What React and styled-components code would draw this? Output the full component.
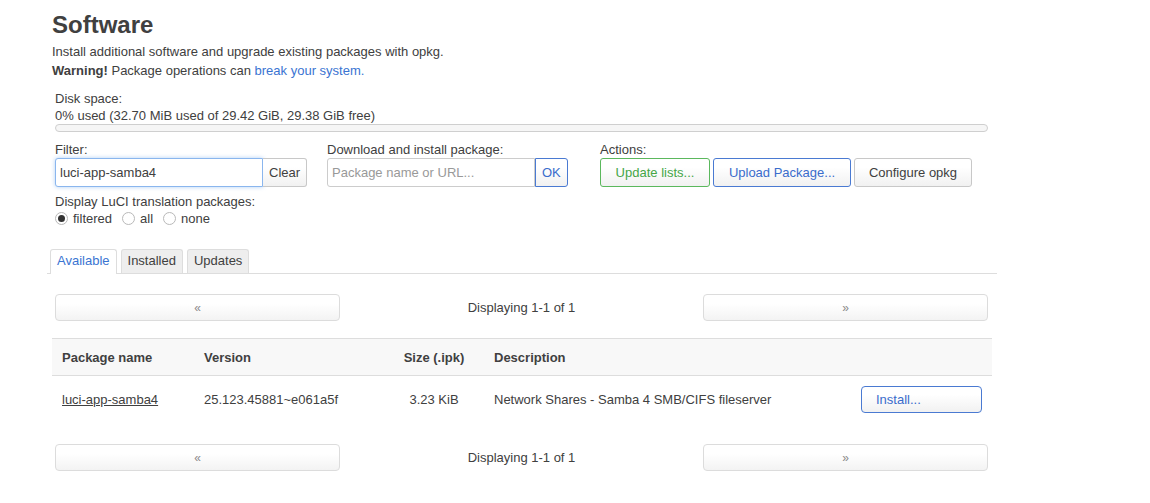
import React from 'react';
import styled, { createGlobalStyle, css } from 'styled-components';

const Global = createGlobalStyle`
  html, body { margin: 0; padding: 0; background: #fff; }
  body {
    font-family: "Liberation Sans", Arial, sans-serif;
    font-size: 13px;
    color: #404040;
  }
  * { box-sizing: border-box; }
`;

const BLUE = '#3a74d2';

const Main = styled.main`
  margin-left: 52px;
  width: 940px;
  padding-top: 10px;
`;

const Title = styled.h2`
  margin: 0;
  font-size: 24px;
  line-height: 30px;
  font-weight: bold;
  color: #404040;
`;

const Desc = styled.div`
  margin-top: 2px;
  line-height: 19px;
`;

const Link = styled.a`
  color: ${BLUE};
  text-decoration: none;
`;

const Section = styled.div`
  margin-top: ${(p) => p.$top || 0}px;
  padding: 0 4px 0 3px;
`;

const Line = styled.div`
  line-height: 17px;
  white-space: nowrap;
`;

const Progress = styled.div`
  height: 8px;
  border: 1px solid #cfcfcf;
  border-radius: 4px;
  background: #f6f6f6;
`;

const Controls = styled.div`
  display: grid;
  grid-template-columns: 272px 273px auto;
  margin-top: 9px;
  padding-left: 3px;
`;

const Field = styled.div`
  display: flex;
  flex-direction: column;
`;

const InputGroup = styled.div`
  display: flex;
  height: 29px;
`;

const TextInput = styled.input`
  width: 208px;
  height: 29px;
  border: 1px solid #ccc;
  border-radius: 3px 0 0 3px;
  padding: 0 4px;
  font: 13px "Liberation Sans", Arial, sans-serif;
  color: #404040;
  outline: none;
  &::placeholder { color: #999; }
  ${(p) =>
    p.$focus &&
    css`
      border-color: #8ab6ee;
      box-shadow: 0 0 4px rgba(82, 150, 236, 0.45);
    `}
`;

const buttonBase = css`
  font: 13px "Liberation Sans", Arial, sans-serif;
  background: linear-gradient(#ffffff, #ffffff 30%, #f1f1f1);
  border: 1px solid #c8c8c8;
  border-radius: 3px;
  color: #404040;
  cursor: pointer;
  height: 29px;
  padding: 0 10px;
  white-space: nowrap;
`;

const variants = {
  positive: css`
    border-color: #5bb85d;
    color: #45a647;
  `,
  action: css`
    border-color: #4a7ad2;
    color: #3a6ccc;
  `,
  neutral: css``,
};

const Button = styled.button`
  ${buttonBase}
  ${(p) => variants[p.$variant || 'neutral']}
  ${(p) => p.$width && css`width: ${p.$width}px;`}
`;

const Addon = styled.button`
  ${buttonBase}
  border-radius: 0 3px 3px 0;
  padding: 0 6px;
  ${(p) => (p.$variant ? variants[p.$variant] : css`border-left: none;`)}
`;

const Actions = styled.div`
  display: flex;
  gap: 3px;
`;

const Translation = styled.div`
  margin-top: 6px;
  padding-left: 3px;
`;

const RadioRow = styled.div`
  display: flex;
  align-items: center;
  height: 17px;
`;

const RadioLabel = styled.label`
  display: inline-flex;
  align-items: center;
  gap: 5px;
  margin-right: 10px;
  line-height: 17px;
`;

const RadioDot = styled.span`
  width: 13px;
  height: 13px;
  border-radius: 50%;
  border: 1px solid #b9b9b9;
  background: #fff;
  display: inline-flex;
  align-items: center;
  justify-content: center;
  &::after {
    content: '';
    width: 7px;
    height: 7px;
    border-radius: 50%;
    background: ${(p) => (p.$checked ? '#333' : 'transparent')};
  }
`;

const Tabs = styled.ul`
  list-style: none;
  margin: 22px -5px 0 -5px;
  padding: 0 0 0 3px;
  display: flex;
  gap: 4px;
  border-bottom: 1px solid #ddd;
`;

const Tab = styled.li`
  height: 24px;
  line-height: 22px;
  padding: 0 6px;
  border: 1px solid #ddd;
  border-bottom: none;
  border-radius: 3px 3px 0 0;
  background: #eeeeee;
  color: #404040;
  ${(p) =>
    p.$active &&
    css`
      background: #fff;
      color: ${BLUE};
      height: 25px;
      margin-bottom: -1px;
    `}
`;

const Pager = styled.div`
  display: grid;
  grid-template-columns: 285px 1fr 285px;
  align-items: center;
  margin: ${(p) => p.$top}px 4px 0 3px;
`;

const PagerButton = styled.button`
  height: 27px;
  border: 1px solid #dcdcdc;
  border-radius: 4px;
  background: linear-gradient(#ffffff, #ffffff 35%, #f3f3f3);
  color: #8a8a8a;
  font: 12px "Liberation Sans", Arial, sans-serif;
  cursor: pointer;
`;

const PagerText = styled.div`
  text-align: center;
`;

const Table = styled.table`
  margin-top: 17px;
  width: 940px;
  border-collapse: collapse;
  table-layout: fixed;
`;

const Col = styled.col`
  ${(p) => p.$width && css`width: ${p.$width}px;`}
`;

const HeadRow = styled.tr`
  background: #f8f8f8;
  border-top: 1px solid #ddd;
  border-bottom: 1px solid #ddd;
`;

const Th = styled.th`
  height: 37px;
  padding: 0 10px;
  font-weight: bold;
  text-align: ${(p) => p.$align || 'left'};
`;

const Td = styled.td`
  padding: 10px;
  line-height: 17px;
  vertical-align: middle;
  text-align: ${(p) => p.$align || 'left'};
  white-space: nowrap;
`;

const PkgLink = styled.a`
  color: #404040;
  text-decoration: underline;
`;

const InstallButton = styled(Button)`
  width: 121px;
  height: 27px;
  text-align: left;
  padding-left: 14px;
  border-radius: 4px;
`;

function PagerBar({ top }) {
  return (
    <Pager $top={top}>
      <PagerButton>«</PagerButton>
      <PagerText>Displaying 1-1 of 1</PagerText>
      <PagerButton>»</PagerButton>
    </Pager>
  );
}

export default function App() {
  return (
    <>
      <Global />
      <Main>
        <Title>Software</Title>
        <Desc>
          Install additional software and upgrade existing packages with opkg.
          <br />
          <strong>Warning!</strong> Package operations can <Link href="#">break your system.</Link>
        </Desc>

        <Section $top={10}>
          <Line>Disk space:</Line>
          <Line>0% used (32.70 MiB used of 29.42 GiB, 29.38 GiB free)</Line>
          <Progress />
        </Section>

        <Controls>
          <Field>
            <Line>Filter:</Line>
            <InputGroup>
              <TextInput $focus defaultValue="luci-app-samba4" />
              <Addon>Clear</Addon>
            </InputGroup>
          </Field>
          <Field>
            <Line>Download and install package:</Line>
            <InputGroup>
              <TextInput placeholder="Package name or URL..." />
              <Addon $variant="action">OK</Addon>
            </InputGroup>
          </Field>
          <Field>
            <Line>Actions:</Line>
            <Actions>
              <Button $variant="positive" $width={110}>Update lists...</Button>
              <Button $variant="action" $width={138}>Upload Package...</Button>
              <Button $width={118}>Configure opkg</Button>
            </Actions>
          </Field>
        </Controls>

        <Translation>
          <Line>Display LuCI translation packages:</Line>
          <RadioRow>
            <RadioLabel><RadioDot $checked />filtered</RadioLabel>
            <RadioLabel><RadioDot />all</RadioLabel>
            <RadioLabel><RadioDot />none</RadioLabel>
          </RadioRow>
        </Translation>

        <Tabs>
          <Tab $active>Available</Tab>
          <Tab>Installed</Tab>
          <Tab>Updates</Tab>
        </Tabs>

        <PagerBar top={20} />

        <Table>
          <colgroup>
            <Col $width={142} />
            <Col $width={190} />
            <Col $width={100} />
            <Col />
            <Col $width={141} />
          </colgroup>
          <thead>
            <HeadRow>
              <Th>Package name</Th>
              <Th>Version</Th>
              <Th $align="center">Size (.ipk)</Th>
              <Th>Description</Th>
              <Th />
            </HeadRow>
          </thead>
          <tbody>
            <tr>
              <Td><PkgLink href="#">luci-app-samba4</PkgLink></Td>
              <Td>25.123.45881~e061a5f</Td>
              <Td $align="center">3.23 KiB</Td>
              <Td>Network Shares - Samba 4 SMB/CIFS fileserver</Td>
              <Td><InstallButton $variant="action">Install...</InstallButton></Td>
            </tr>
          </tbody>
        </Table>

        <PagerBar top={21} />
      </Main>
    </>
  );
}
